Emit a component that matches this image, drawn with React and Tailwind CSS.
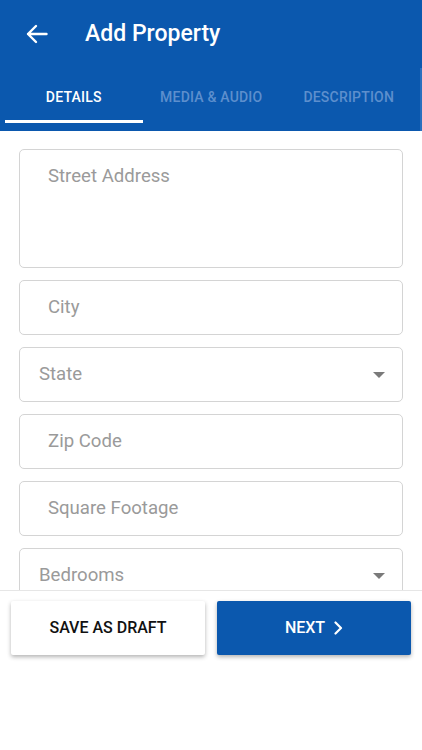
import React from "react";

const font = { fontFamily: "Roboto, 'Noto Sans', sans-serif" };

function Caret() {
  return (
    <svg width="12" height="6" viewBox="0 0 12 6" className="shrink-0">
      <path d="M0 0h12L6 6z" fill="#7a7a7a" />
    </svg>
  );
}

function Field({ label, tall, select }) {
  return (
    <div
      className={`w-full shrink-0 rounded-[5px] border border-[#d4d4d4] bg-white flex ${
        tall ? "h-[119px] items-start pt-[17px]" : "h-[55px] items-center"
      } ${select ? "pl-[19px] pr-[17px] justify-between" : "pl-[28px]"}`}
    >
      <span className="text-[18.6px] text-[#9a9a9a] leading-none">{label}</span>
      {select && <Caret />}
    </div>
  );
}

export default function App() {
  const tabs = ["DETAILS", "MEDIA & AUDIO", "DESCRIPTION"];
  return (
    <div className="w-[422px] h-[750px] bg-white flex flex-col overflow-hidden" style={font}>
      {/* header */}
      <div className="bg-[#0b58ae] shrink-0">
        <div className="h-[68px] flex items-center pl-[26px]">
          <svg width="22" height="20" viewBox="0 0 22 20" fill="none" stroke="white" strokeWidth="2.4" strokeLinecap="round" strokeLinejoin="round">
            <path d="M20.5 10H2M10 2L2 10l8 8" />
          </svg>
          <span className="ml-[37px] text-white text-[23px] font-medium">Add Property</span>
        </div>
        <div className="h-[63px] flex pl-[5px] border-r-2 border-[#2a6fbe]">
          {tabs.map((t, i) => (
            <div key={t} className="w-[137.5px] flex flex-col items-center">
              <span
                className={`mt-[19px] text-[14px] font-medium tracking-[0.2px] ${
                  i === 0 ? "text-white" : "text-[#5d8fcd]"
                }`}
              >
                {t}
              </span>
              <div className={`mt-auto mb-[8px] h-[3px] w-full ${i === 0 ? "bg-white" : ""}`} />
            </div>
          ))}
        </div>
      </div>

      {/* form */}
      <div className="h-[459px] shrink-0 overflow-hidden px-[19px] pt-[18px] flex flex-col gap-[12px]">
        <Field label="Street Address" tall />
        <Field label="City" />
        <Field label="State" select />
        <Field label="Zip Code" />
        <Field label="Square Footage" />
        <Field label="Bedrooms" select />
      </div>

      {/* footer */}
      <div className="border-t border-[#e6e6e6] bg-white flex gap-[12px] px-[11px] pt-[10px] flex-1">
        <button className="w-[194px] h-[54px] bg-white rounded-[2px] shadow-[0_2px_4px_rgba(0,0,0,0.3)] text-[16px] font-medium text-[#111]">
          SAVE AS DRAFT
        </button>
        <button className="w-[194px] h-[54px] bg-[#0b58ae] rounded-[2px] shadow-[0_2px_4px_rgba(0,0,0,0.3)] text-[16px] font-medium text-white flex items-center justify-center gap-[9px]">
          NEXT
          <svg width="9" height="14" viewBox="0 0 9 14" fill="none" stroke="white" strokeWidth="2.2" strokeLinecap="round" strokeLinejoin="round">
            <path d="M1.5 1.5L7 7l-5.5 5.5" />
          </svg>
        </button>
      </div>
    </div>
  );
}
